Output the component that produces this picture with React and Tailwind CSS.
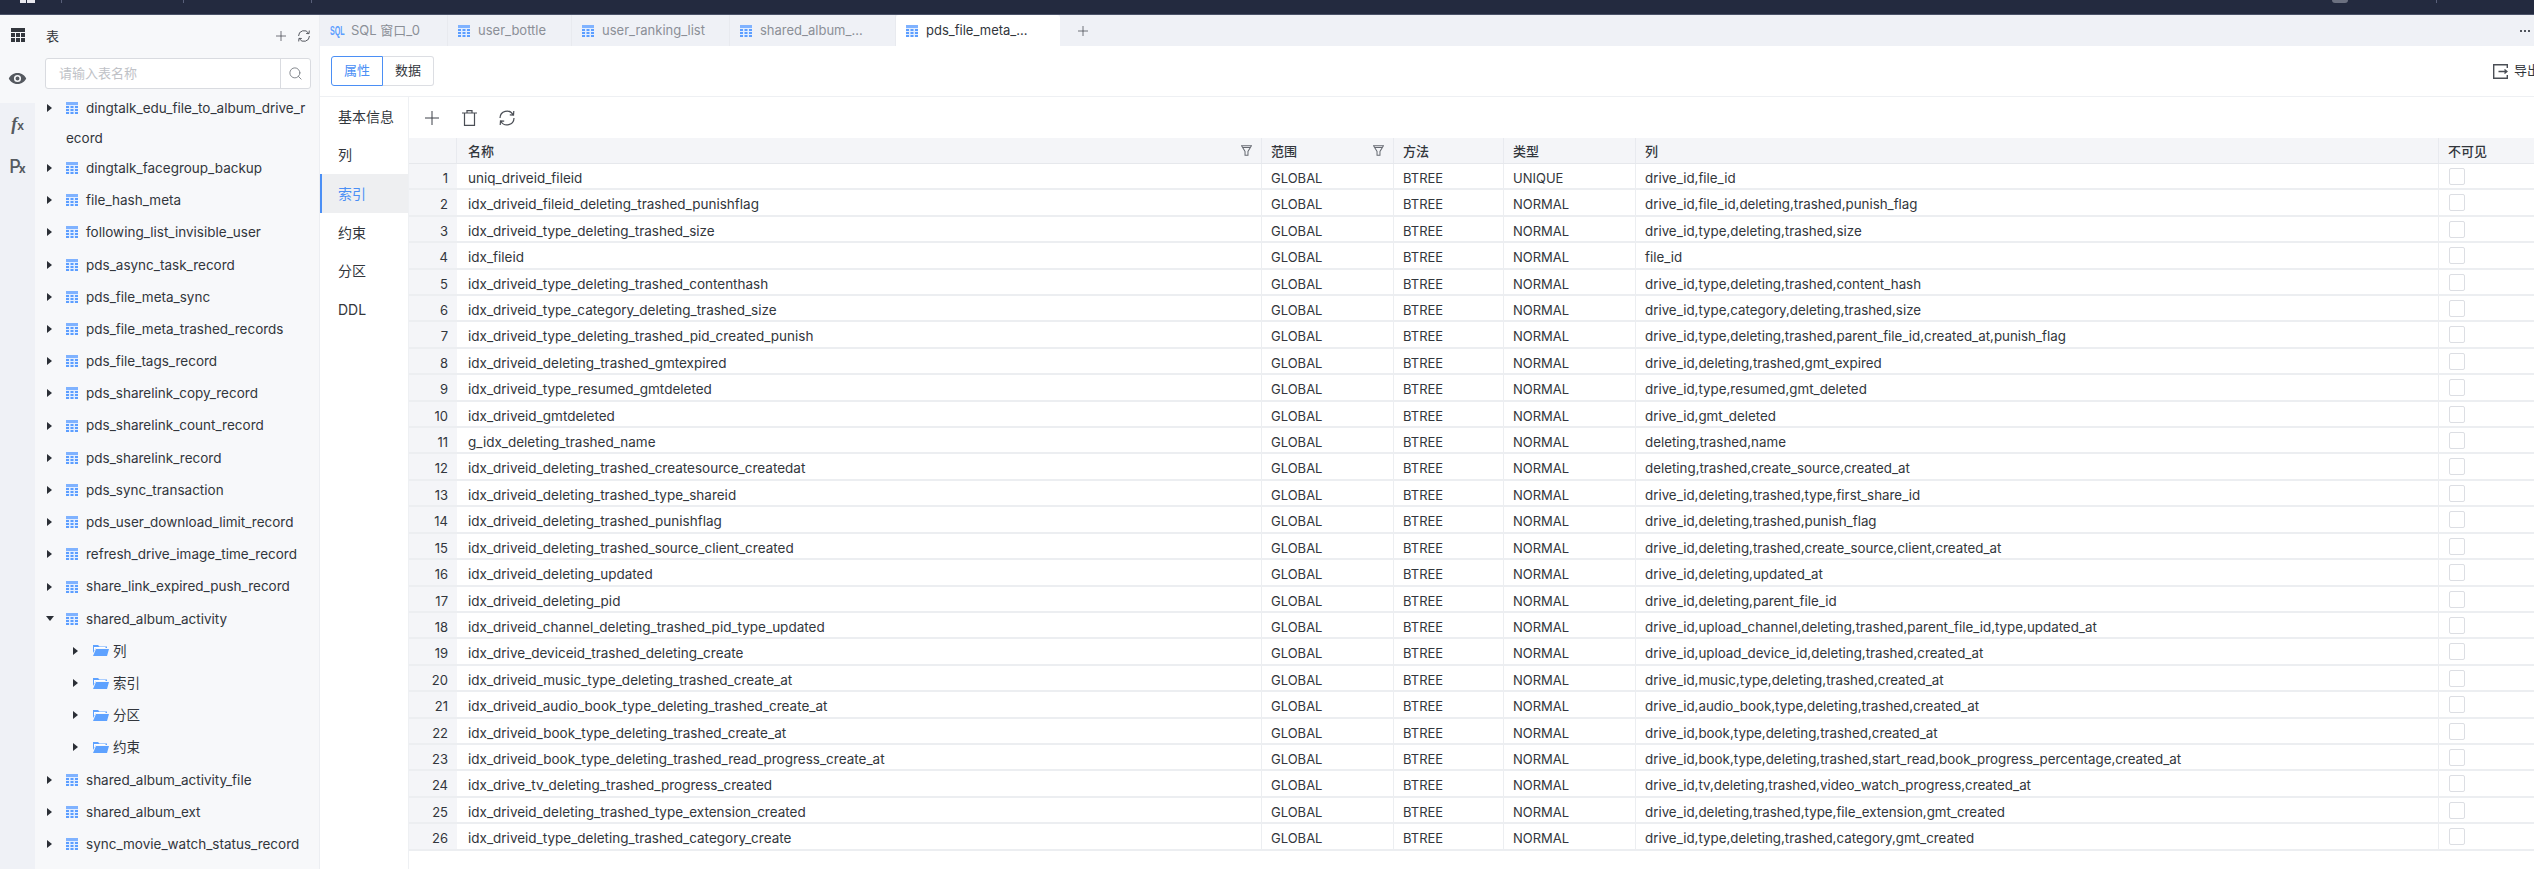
import { Search } from "lucide-react";

const tables = [
    "dingtalk_facegroup_backup",
    "file_hash_meta",
    "following_list_invisible_user",
    "pds_async_task_record",
    "pds_file_meta_sync",
    "pds_file_meta_trashed_records",
    "pds_file_tags_record",
    "pds_sharelink_copy_record",
    "pds_sharelink_count_record",
    "pds_sharelink_record",
    "pds_sync_transaction",
    "pds_user_download_limit_record",
    "refresh_drive_image_time_record",
    "share_link_expired_push_record",
];

const indexes = [
    ["uniq_driveid_fileid", "UNIQUE", "drive_id,file_id"],
    ["idx_driveid_fileid_deleting_trashed_punishflag", "NORMAL", "drive_id,file_id,deleting,trashed,punish_flag"],
    ["idx_driveid_type_deleting_trashed_size", "NORMAL", "drive_id,type,deleting,trashed,size"],
    ["idx_fileid", "NORMAL", "file_id"],
    ["idx_driveid_type_deleting_trashed_contenthash", "NORMAL", "drive_id,type,deleting,trashed,content_hash"],
    ["idx_driveid_type_category_deleting_trashed_size", "NORMAL", "drive_id,type,category,deleting,trashed,size"],
    ["idx_driveid_type_deleting_trashed_pid_created_punish", "NORMAL", "drive_id,type,deleting,trashed,parent_file_id,created_at,punish_flag"],
    ["idx_driveid_deleting_trashed_gmtexpired", "NORMAL", "drive_id,deleting,trashed,gmt_expired"],
    ["idx_driveid_type_resumed_gmtdeleted", "NORMAL", "drive_id,type,resumed,gmt_deleted"],
    ["idx_driveid_gmtdeleted", "NORMAL", "drive_id,gmt_deleted"],
    ["g_idx_deleting_trashed_name", "NORMAL", "deleting,trashed,name"],
    ["idx_driveid_deleting_trashed_createsource_createdat", "NORMAL", "deleting,trashed,create_source,created_at"],
    ["idx_driveid_deleting_trashed_type_shareid", "NORMAL", "drive_id,deleting,trashed,type,first_share_id"],
    ["idx_driveid_deleting_trashed_punishflag", "NORMAL", "drive_id,deleting,trashed,punish_flag"],
    ["idx_driveid_deleting_trashed_source_client_created", "NORMAL", "drive_id,deleting,trashed,create_source,client,created_at"],
    ["idx_driveid_deleting_updated", "NORMAL", "drive_id,deleting,updated_at"],
    ["idx_driveid_deleting_pid", "NORMAL", "drive_id,deleting,parent_file_id"],
    ["idx_driveid_channel_deleting_trashed_pid_type_updated", "NORMAL", "drive_id,upload_channel,deleting,trashed,parent_file_id,type,updated_at"],
    ["idx_drive_deviceid_trashed_deleting_create", "NORMAL", "drive_id,upload_device_id,deleting,trashed,created_at"],
    ["idx_driveid_music_type_deleting_trashed_create_at", "NORMAL", "drive_id,music,type,deleting,trashed,created_at"],
    ["idx_driveid_audio_book_type_deleting_trashed_create_at", "NORMAL", "drive_id,audio_book,type,deleting,trashed,created_at"],
    ["idx_driveid_book_type_deleting_trashed_create_at", "NORMAL", "drive_id,book,type,deleting,trashed,created_at"],
    ["idx_driveid_book_type_deleting_trashed_read_progress_create_at", "NORMAL", "drive_id,book,type,deleting,trashed,start_read,book_progress_percentage,created_at"],
    ["idx_drive_tv_deleting_trashed_progress_created", "NORMAL", "drive_id,tv,deleting,trashed,video_watch_progress,created_at"],
    ["idx_driveid_deleting_trashed_type_extension_created", "NORMAL", "drive_id,deleting,trashed,type,file_extension,gmt_created"],
    ["idx_driveid_type_deleting_trashed_category_create", "NORMAL", "drive_id,type,deleting,trashed,category,gmt_created"],
];

const tabs = [
    { name: "user_bottle", width: "w-[124px]" },
    { name: "user_ranking_list", width: "w-[158px]" },
    { name: "shared_album_...", width: "w-[166px]" },
];

const navItems = ["基本信息", "列", "索引", "约束", "分区", "DDL"];

function TableIcon() {
    return (
        <svg viewBox="0 0 12 12" className="w-3 h-3 shrink-0">
            <rect width="12" height="12" fill="#e3eeff" />
            <rect x="0" y="0" width="12" height="3" fill="#7fb2ff" />
            {[4, 7, 10].map((y) =>
                [0, 4.5, 9].map((x) => (
                    <rect key={`${x}-${y}`} x={x} y={y} width="3" height="2" fill="#5c9eff" />
                ))
            )}
        </svg>
    );
}

function GridIcon() {
    return (
        <svg viewBox="0 0 14 14" className="w-[14px] h-[14px] fill-[#33373d]">
            <rect x="0" y="0" width="14" height="4" />
            {[5, 10].map((y) =>
                [0, 5, 10].map((x) => (
                    <rect key={`${x}-${y}`} x={x} y={y} width="4" height="4" />
                ))
            )}
        </svg>
    );
}

function FolderIcon() {
    return (
        <svg viewBox="0 0 16 11" className="w-4 h-[11px] shrink-0">
            <path d="M0 0h5l1.5 1.5H14V3H3L0 8z" fill="#5ea2ff" />
            <path d="M1 2h11.5v1H3L1 6z" fill="#fff" />
            <path d="M3 4h13l-2 7H0z" fill="#5ea2ff" />
        </svg>
    );
}

function Caret({ open }) {
    return open ? (
        <span className="w-0 h-0 border-x-[4px] border-x-transparent border-t-[5px] border-t-[#2b2f36]" />
    ) : (
        <span className="w-0 h-0 border-y-[4px] border-y-transparent border-l-[5px] border-l-[#2b2f36]" />
    );
}

function FilterIcon() {
    return (
        <svg viewBox="0 0 12 12" className="w-[11px] h-[11px] fill-none stroke-[#666a72] stroke-[1.1]">
            <path d="M.6.8h10.8L7.6 7v4.2H4.4V7zM2 2.6h8" />
        </svg>
    );
}

function PlusIcon({ size }) {
    return (
        <svg viewBox="0 0 14 14" width={size} height={size} className="shrink-0 stroke-[#3c4048] fill-none">
            <path d="M7 0v14M0 7h14" />
        </svg>
    );
}

function RefreshIcon({ size }) {
    return (
        <svg viewBox="0 0 18 18" width={size} height={size} className="shrink-0 stroke-[#4a4e55] fill-none stroke-[1.2]">
            <path d="M2 9A7 7 0 0 1 15 5.5M15.8 2l-.3 4-3.7-.2M16 9A7 7 0 0 1 3 12.5M2.2 16l.3-4 3.7.2" />
        </svg>
    );
}

function TreeRow({ name, open }) {
    return (
        <div className="flex items-center h-[32.2px]">
            <span className="flex justify-center shrink-0 w-[11px] mr-[11px]"><Caret open={open} /></span>
            <TableIcon />
            <span className="ml-2 whitespace-nowrap">{name}</span>
        </div>
    );
}

function FolderRow({ name }) {
    return (
        <div className="flex items-center h-[32.2px] pl-[26px]">
            <span className="flex justify-center shrink-0 w-[11px] mr-[12px]"><Caret /></span>
            <FolderIcon />
            <span className="ml-1">{name}</span>
        </div>
    );
}

export default function App() {
    return (
        <div className="w-[2534px] h-[869px] overflow-hidden flex flex-col bg-white text-[#32363c] font-['Inter','Noto_Sans_CJK_SC',sans-serif]">
            {/* top bar */}
            <div className="h-[15px] shrink-0 bg-[#232a3f] border-b border-[#4a5268] flex relative">
                <div className="ml-[20px] mt-0 flex gap-px h-[3px]">
                    <span className="w-[6px] bg-[#e8e8ee]" />
                    <span className="w-[8px] bg-[#e8e8ee]" />
                </div>
                <span className="absolute left-[61px] top-0 h-[3px] w-px bg-[#59607a]" />
                <span className="absolute left-[183px] top-0 h-[3px] w-px bg-[#59607a]" />
                <span className="absolute left-[311px] top-0 h-[3px] w-px bg-[#59607a]" />
                <span className="absolute left-[2332px] top-0 h-[3px] w-[16px] rounded-b-full bg-[#6b7080]" />
                <span className="absolute left-[2436px] top-0 h-[3px] w-px bg-[#59607a]" />
            </div>

            <div className="flex flex-1 min-h-0">
                {/* icon rail */}
                <div className="w-[35px] shrink-0 bg-[#eff1f6] flex flex-col text-[#555a60]">
                    <div className="h-[88px] bg-[#f7f8fa] flex flex-col items-center">
                        <div className="mt-[13px] h-[14px]"><GridIcon /></div>
                        <svg viewBox="0 0 24 24" className="w-[19px] h-[19px] mt-[27px] fill-[#55595f]">
                            <path d="M12 5C6.5 5 2.6 8.5 1 12c1.6 3.5 5.5 7 11 7s9.4-3.5 11-7c-1.6-3.5-5.5-7-11-7zm0 11.5a4.5 4.5 0 1 1 0-9 4.5 4.5 0 0 1 0 9zm0-7a2.5 2.5 0 1 0 0 5 2.5 2.5 0 0 0 0-5z" />
                        </svg>
                    </div>
                    <div className="mt-[11px] h-[20px] flex items-baseline justify-center leading-[20px] font-bold">
                        <span className="italic text-[18px] font-['Liberation_Serif',serif]">f</span>
                        <span className="text-[12px] font-['Liberation_Sans',sans-serif]">x</span>
                    </div>
                    <div className="mt-[23px] h-[20px] flex items-baseline justify-center leading-[20px] font-medium font-['Inter',sans-serif]">
                        <span className="text-[18px]">P</span>
                        <span className="text-[12px] font-bold -ml-[2px]">x</span>
                    </div>
                </div>

                {/* table tree */}
                <div className="w-[285px] shrink-0 bg-[#f7f8fa] border-r border-[#eceef2] px-[9px] text-[13.5px]">
                    <div className="flex items-center justify-between h-[43px] pl-[2px] -mr-[1px]">
                        <span className="text-[13px]">表</span>
                        <div className="flex items-center gap-[11px] -mt-[1px]">
                            <PlusIcon size={10} />
                            <RefreshIcon size={14} />
                        </div>
                    </div>
                    <div className="flex h-[31px] bg-white border border-[#d9dbe0] rounded-[3px] w-[266px] ml-px">
                        <div className="flex-1 pl-[13px] text-[13px] leading-[29px] text-[#c0c2c7]">请输入表名称</div>
                        <div className="w-[30px] border-l border-[#d9dbe0] flex items-center justify-center">
                            <Search size={15} strokeWidth={1.5} className="text-[#7d8188]" />
                        </div>
                    </div>
                    <div className="mt-[3px]">
                        <div className="leading-[28px] h-[60px]">
                            <div className="flex items-center h-[32px]">
                                <span className="flex justify-center shrink-0 w-[11px] mr-[11px]"><Caret /></span>
                                <TableIcon />
                                <span className="ml-2 whitespace-nowrap">dingtalk_edu_file_to_album_drive_r</span>
                            </div>
                            <div className="pl-[22px]">ecord</div>
                        </div>
                        {tables.map((t) => (
                            <TreeRow key={t} name={t} />
                        ))}
                        <TreeRow name="shared_album_activity" open />
                        {["列", "索引", "分区", "约束"].map((f) => (
                            <FolderRow key={f} name={f} />
                        ))}
                        <TreeRow name="shared_album_activity_file" />
                        <TreeRow name="shared_album_ext" />
                        <TreeRow name="sync_movie_watch_status_record" />
                    </div>
                </div>

                {/* main area */}
                <div className="flex-1 min-w-0 flex flex-col">
                    {/* tabs */}
                    <div className="h-[31px] shrink-0 bg-[#eff1f6] flex items-center text-[13px] text-[#8b8f97]">
                        <div className="w-[128px] h-full flex items-center pl-[10px] border-r border-[#e8eaef]">
                            <span className="w-[15px] mr-[6px] text-[13px] font-bold leading-none text-[#5c9eff] font-['Liberation_Sans',sans-serif] origin-left scale-x-[0.55]">SQL</span>
                            SQL 窗口_0
                        </div>
                        {tabs.map((t) => (
                            <div key={t.name} className={`${t.width} h-full flex items-center pl-[10px] border-r border-[#e8eaef]`}>
                                <TableIcon />
                                <span className="ml-2">{t.name}</span>
                            </div>
                        ))}
                        <div className="w-[164px] h-full flex items-center pl-[10px] bg-white text-[#32363c] rounded-t-[3px]">
                            <TableIcon />
                            <span className="ml-2">pds_file_meta_...</span>
                        </div>
                        <div className="ml-[18px]"><PlusIcon size={10} /></div>
                        <div className="ml-auto mr-[4px] flex gap-[2px]">
                            <span className="w-[2px] h-[2px] bg-[#50545c]" />
                            <span className="w-[2px] h-[2px] bg-[#50545c]" />
                            <span className="w-[2px] h-[2px] bg-[#50545c]" />
                        </div>
                    </div>

                    {/* view switch */}
                    <div className="h-[51px] shrink-0 border-b border-[#eef0f3] flex items-center pl-[11px] text-[13px]">
                        <div className="w-[52px] h-[30px] flex items-center justify-center border border-[#4b8ff5] rounded-l-[3px] text-[#4b8ff5]">属性</div>
                        <div className="w-[51px] h-[30px] flex items-center justify-center border border-l-0 border-[#dcdee3] rounded-r-[3px]">数据</div>
                        <div className="ml-auto flex items-center gap-[6px] shrink-0 w-[41px]">
                            <svg viewBox="0 0 15 15" className="w-[15px] h-[15px] shrink-0 fill-none stroke-[#4a4e55] stroke-[1.4]">
                                <path d="M14.3 4V.7H.7v13.6h13.6V11M5.5 7.5H14M11.5 5.5l2.5 2-2.5 2" />
                            </svg>
                            <span className="whitespace-nowrap">导出</span>
                        </div>
                    </div>

                    <div className="flex-1 min-h-0 flex">
                        {/* section nav */}
                        <div className="w-[89px] shrink-0 border-r border-[#eef0f3] text-[14px]">
                            {navItems.map((item) => (
                                <div
                                    key={item}
                                    className={
                                        item === "索引"
                                            ? "h-[38.6px] flex items-center pl-[16px] border-l-2 border-[#4b8ff5] bg-[#eeeff1] text-[#4b8ff5]"
                                            : "h-[38.6px] flex items-center pl-[18px]"
                                    }
                                >
                                    {item}
                                </div>
                            ))}
                        </div>

                        {/* index list */}
                        <div className="flex-1 min-w-0">
                            <div className="h-[41px] flex items-center pl-[16px]">
                                <PlusIcon size={14} />
                                <svg viewBox="0 0 15 16" className="w-[15px] h-4 ml-[23px] shrink-0 fill-none stroke-[#4a4e55] stroke-[1.2]">
                                    <path d="M0 3h15M5 3V.7h5V3M2.5 3v12.3h10V3" />
                                </svg>
                                <div className="ml-[21px]"><RefreshIcon size={18} /></div>
                            </div>
                            <div className="text-[13px] leading-[26px]">
                                <div className="flex h-[26px] bg-[#f4f5f8] border-b border-[#e6e8ec] font-medium">
                                    <div className="w-[48px] shrink-0 border-r border-[#e8eaef]" />
                                    <div className="w-[805px] shrink-0 pl-[11px] pr-[9px] flex items-center justify-between border-r border-[#e8eaef]">名称<FilterIcon /></div>
                                    <div className="w-[132px] shrink-0 pl-[9px] pr-[9px] flex items-center justify-between border-r border-[#e8eaef]">范围<FilterIcon /></div>
                                    <div className="w-[110px] shrink-0 pl-[9px] border-r border-[#e8eaef]">方法</div>
                                    <div className="w-[132px] shrink-0 pl-[9px] border-r border-[#e8eaef]">类型</div>
                                    <div className="w-[803px] shrink-0 pl-[9px] border-r border-[#e8eaef]">列</div>
                                    <div className="flex-1 pl-[9px] whitespace-nowrap">不可见</div>
                                </div>
                                {indexes.map((row, i) => (
                                    <div key={row[0]} className="flex h-[26.42px] border-b-2 border-[#eceef1] leading-[28px]">
                                        <div className="w-[48px] shrink-0 bg-[#f4f5f8] pr-[9px] text-right">{i + 1}</div>
                                        <div className="w-[805px] shrink-0 pl-[11px] text-[13.5px] border-r border-[#eceef1]">{row[0]}</div>
                                        <div className="w-[132px] shrink-0 pl-[9px] border-r border-[#eceef1]">GLOBAL</div>
                                        <div className="w-[110px] shrink-0 pl-[9px] border-r border-[#eceef1]">BTREE</div>
                                        <div className="w-[132px] shrink-0 pl-[9px] border-r border-[#eceef1]">{row[1]}</div>
                                        <div className="w-[803px] shrink-0 pl-[9px] text-[13.35px] border-r border-[#eceef1]">{row[2]}</div>
                                        <div className="flex-1 pl-[10px] pt-[4px]">
                                            <div className="w-4 h-[17px] bg-white border border-[#dcdee3] rounded-[2px]" />
                                        </div>
                                    </div>
                                ))}
                            </div>
                        </div>
                    </div>
                </div>
            </div>
        </div>
    );
}
